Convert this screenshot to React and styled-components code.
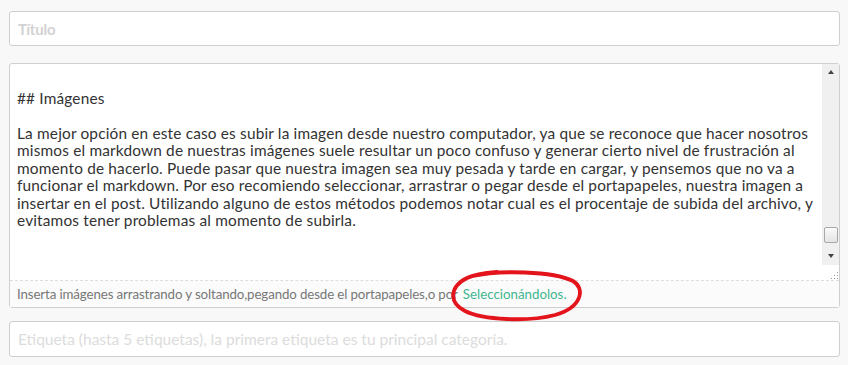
import React from 'react';
import styled, { createGlobalStyle } from 'styled-components';

const GlobalStyle = createGlobalStyle`
  html, body {
    margin: 0;
    padding: 0;
    background: #f8f8f8;
  }
  body {
    font-family: Lato, "Open Sans", sans-serif;
    color: #333;
  }
`;

const Page = styled.div`
  width: 848px;
  height: 365px;
  padding: 11px 8px 0 9px;
  box-sizing: border-box;
  display: flex;
  flex-direction: column;
  gap: 17px;
`;

const Field = styled.div`
  height: ${p => (p.$bold ? 35 : 36)}px;
  background: #fff;
  border: 1px solid #cfcfcf;
  border-radius: 3px;
  box-sizing: border-box;
  display: flex;
  align-items: center;
  padding: 0 8px;
  font-size: ${p => (p.$bold ? '15px' : '15.5px')};
  font-weight: ${p => (p.$bold ? 700 : 400)};
  color: ${p => (p.$bold ? '#d2d2d2' : '#dcdcdc')};
  letter-spacing: ${p => (p.$bold ? '-0.2px' : '0')};
  margin-top: ${p => p.$pull || 0}px;
`;

const Editor = styled.div`
  height: 245px;
  background: #fff;
  border: 1px solid #cfcfcf;
  border-radius: 3px;
  box-sizing: border-box;
  display: flex;
  flex-direction: column;
`;

const TextArea = styled.div`
  flex: 1;
  display: flex;
  border-bottom: 1px dashed #ddd;
  min-height: 0;
`;

const Content = styled.div`
  flex: 1;
  padding: 8px 0 0 7px;
  font-size: 15.4px;
  line-height: 17.5px;
  letter-spacing: 0.17px;
  color: #333;
  white-space: pre;
`;

const Scrollbar = styled.div`
  width: 17px;
  background: #f0f0f0;
  display: flex;
  flex-direction: column;
  align-items: center;
`;

const Arrow = styled.div`
  width: 0;
  height: 0;
  border-left: 3.5px solid transparent;
  border-right: 3.5px solid transparent;
  ${p => (p.$down
    ? 'border-top: 4px solid #444;'
    : 'border-bottom: 4px solid #444;')}
  margin: ${p => (p.$down ? '7px 0 7px' : '6px 0 0')};
`;

const Track = styled.div`
  flex: 1;
  width: 100%;
  display: flex;
  flex-direction: column;
  justify-content: flex-end;
  align-items: center;
`;

const Thumb = styled.div`
  width: 14px;
  height: 16px;
  margin-bottom: 4px;
  box-sizing: border-box;
  border: 1px solid #a8a8a8;
  border-radius: 2px;
  background: linear-gradient(#fafafa, #e4e4e4);
`;

const Grip = styled.div`
  height: 15px;
  width: 100%;
  background: #fff;
  display: flex;
  justify-content: flex-end;
  align-items: flex-end;
`;

const Footer = styled.div`
  height: 26px;
  display: flex;
  align-items: center;
  padding: 0 7px;
  font-size: 13.3px;
  color: #777;
  background: #fbfbfb;
  letter-spacing: -0.12px;
  position: relative;
`;

const Link = styled.span`
  color: #3fb58f;
  margin-left: 5px;
  letter-spacing: 0;
`;

const Circle = styled.svg`
  position: absolute;
  left: 433px;
  top: -14px;
  pointer-events: none;
`;

export default function App() {
  const text = `
## Imágenes

La mejor opción en este caso es subir la imagen desde nuestro computador, ya que se reconoce que hacer nosotros
mismos el markdown de nuestras imágenes suele resultar un poco confuso y generar cierto nivel de frustración al
momento de hacerlo. Puede pasar que nuestra imagen sea muy pesada y tarde en cargar, y pensemos que no va a
funcionar el markdown. Por eso recomiendo seleccionar, arrastrar o pegar desde el portapapeles, nuestra imagen a
insertar en el post. Utilizando alguno de estos métodos podemos notar cual es el procentaje de subida del archivo, y
evitamos tener problemas al momento de subirla.`;

  return (
    <>
      <GlobalStyle />
      <Page>
        <Field $bold>Título</Field>
        <Editor>
          <TextArea>
            <Content>{text}</Content>
            <Scrollbar>
              <Arrow />
              <Track>
                <Thumb />
              </Track>
              <Arrow $down />
              <Grip>
                <svg width="9" height="9" viewBox="0 0 9 9">
                  {[[7, 1], [7, 4], [4, 4], [7, 7], [4, 7], [1, 7]].map(([x, y]) => (
                    <rect key={`${x}-${y}`} x={x} y={y} width="1" height="1" fill="#999" />
                  ))}
                </svg>
              </Grip>
            </Scrollbar>
          </TextArea>
          <Footer>
            Inserta imágenes arrastrando y soltando,pegando desde el portapapeles,o por
            <Link>Seleccionándolos.</Link>
            <Circle width="150" height="58" viewBox="0 0 150 58">
              <path
                d="M30 9 C55 3, 110 4, 130 14 C142 21, 140 40, 112 48 C85 55, 40 53, 22 44 C6 36, 6 20, 24 11 C32 7, 42 6, 54 5"
                fill="none"
                stroke="#e3141c"
                strokeWidth="3.8"
                strokeLinecap="round"
              />
            </Circle>
          </Footer>
        </Editor>
        <Field $pull={-4}>Etiqueta (hasta 5 etiquetas), la primera etiqueta es tu principal categoría.</Field>
      </Page>
    </>
  );
}
